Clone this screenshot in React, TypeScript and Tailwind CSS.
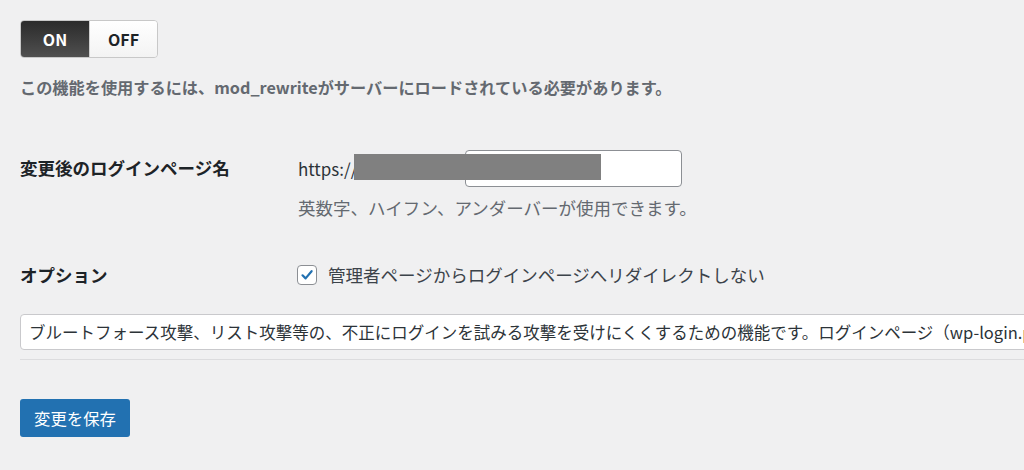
import React from 'react';

const FONT = { fontFamily: '"Noto Sans CJK JP", "Noto Sans", sans-serif' };

function Toggle() {
  return (
    <div className="flex h-[38px] w-[138px] overflow-hidden rounded-[4px] border border-[#c8c8c8]">
      <div className="flex w-[68px] items-center justify-center bg-gradient-to-b from-[#2b2b2b] to-[#505050] text-[16px] font-bold text-white">
        ON
      </div>
      <div className="flex flex-1 items-center justify-center border-l border-[#d0d0d0] bg-gradient-to-b from-white to-[#f3f3f3] text-[16px] font-bold text-[#1d2327]">
        OFF
      </div>
    </div>
  );
}

function Check() {
  return (
    <span className="flex h-[20px] w-[20px] items-center justify-center rounded-[4px] border border-[#8c8f94] bg-white">
      <svg width="14" height="14" viewBox="0 0 14 14" fill="none">
        <path d="M2.5 7.3 L5.6 10.4 L11.6 3.2" stroke="#2271b1" strokeWidth="2.2" strokeLinecap="round" strokeLinejoin="round" />
      </svg>
    </span>
  );
}

export default function App() {
  return (
    <div className="h-[470px] w-[1024px] overflow-hidden bg-[#f0f0f1]" style={FONT}>
      <div className="pl-[20px] pt-[20px]">
        <Toggle />
        <p className="mt-[17px] text-[16.2px] leading-[24px] font-bold text-[#646970]">
          この機能を使用するには、mod_rewriteがサーバーにロードされている必要があります。
        </p>

        <div className="relative mt-[51px] flex">
          <div className="flex h-[37px] w-[278px] shrink-0 items-center text-[17.5px] font-bold text-[#1d2327]">
            変更後のログインページ名
          </div>
          <div>
            <div className="flex h-[37px] items-center">
              <span className="w-[56px] text-[17px] text-[#2c3338]">https://</span>
              <span className="w-[111px]" />
              <input
                readOnly
                className="h-[37px] w-[217px] rounded-[4px] border border-[#8c8f94] bg-white px-2 text-[16px] outline-none"
              />
            </div>
            <p className="mt-[9px] text-[17.5px] leading-[24px] text-[#646970]">
              英数字、ハイフン、アンダーバーが使用できます。
            </p>
          </div>
          {/* redacted domain */}
          <div className="absolute left-[334px] top-[4px] h-[26px] w-[247px] bg-[#808080]" />
        </div>

        <div className="mt-[42px] flex items-center">
          <div className="w-[277px] shrink-0 text-[17.5px] font-bold text-[#1d2327]">オプション</div>
          <label className="flex items-center gap-[11px] text-[17.5px] text-[#3c434a]">
            <Check />
            管理者ページからログインページへリダイレクトしない
          </label>
        </div>

        <div className="mt-[26px] flex h-[36px] w-[1100px] items-center overflow-hidden whitespace-nowrap rounded-[4px] border border-[#c9c9cc] bg-white pl-[8px] text-[16.5px] text-[#2c3338]">
          ブルートフォース攻撃、リスト攻撃等の、不正にログインを試みる攻撃を受けにくくするための機能です。ログインページ（wp-login.php）のURLを変更します。
        </div>

        <div className="mt-[9px] h-px bg-[#dcdcde]" />

        <button className="mt-[39px] flex h-[38px] w-[110px] items-center justify-center rounded-[3px] bg-[#2271b1] text-[16.4px] text-white">
          変更を保存
        </button>
      </div>
    </div>
  );
}
